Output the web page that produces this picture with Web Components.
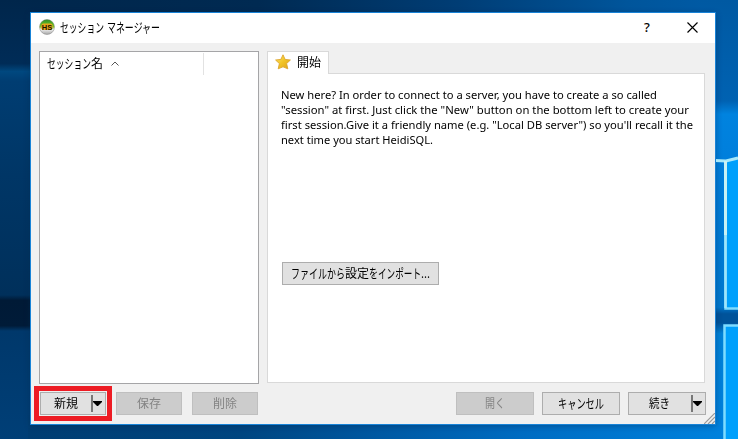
<!DOCTYPE html>
<html lang="ja">
<head>
<meta charset="utf-8">
<title>セッション マネージャー</title>
<style>
html, body { margin: 0; width: 738px; height: 439px; overflow: hidden; }
body { font: 12px/15px "Noto Sans CJK JP", "Noto Sans", sans-serif; color: #000; }
</style>
</head>
<body>
<desk-top>
  <session-dialog></session-dialog>
</desk-top>
<script>
// Text run condensed or widened to a given width.
class FitText extends HTMLElement {
  connectedCallback() {
    const root = this.attachShadow({ mode: 'open' });
    root.innerHTML = `<style>
      :host { display: inline-block; white-space: nowrap; vertical-align: top; width: ${this.getAttribute('w')}px; }
      :host([kana]) { font-size: 13px; }
      span { display: inline-block; transform-origin: 0 50%; white-space: pre; }
    </style><span><slot></slot></span>`;
    const span = root.querySelector('span');
    const w = span.getBoundingClientRect().width;
    if (w) span.style.transform = `scaleX(${this.getAttribute('w') / w})`;
  }
}

// Wallpaper with the light-window logo.
class DeskTop extends HTMLElement {
  constructor() {
    super();
    this.attachShadow({ mode: 'open' }).innerHTML = `<style>
      :host { display: grid; width: 738px; height: 439px; overflow: hidden; }
      svg, ::slotted(*) { grid-area: 1 / 1; }
      svg { display: block; }
      ::slotted(*) { margin: 12px 0 0 30px; }
    </style>
    <svg width="738" height="439" viewBox="0 0 738 439">
      <defs>
        <linearGradient id="top"><stop offset="0" stop-color="#00264b"/><stop offset=".35" stop-color="#002a52"/><stop offset=".62" stop-color="#003d75"/><stop offset=".85" stop-color="#00559b"/><stop offset="1" stop-color="#005ca8"/></linearGradient>
        <linearGradient id="left" x2="0" y2="1"><stop offset="0" stop-color="#00264b"/><stop offset=".145" stop-color="#002c57"/><stop offset=".163" stop-color="#00487f"/><stop offset=".185" stop-color="#003d72"/><stop offset=".4" stop-color="#003666"/><stop offset=".672" stop-color="#00305b"/><stop offset=".684" stop-color="#001a36"/><stop offset=".742" stop-color="#001b38"/><stop offset=".754" stop-color="#00386b"/><stop offset="1" stop-color="#003f77"/></linearGradient>
        <linearGradient id="right" x2="0" y2="1"><stop offset="0" stop-color="#0059a2"/><stop offset=".23" stop-color="#0062b2"/><stop offset=".26" stop-color="#0083df"/><stop offset=".4" stop-color="#007ddb"/><stop offset=".7" stop-color="#0078ce"/><stop offset=".715" stop-color="#00539a"/><stop offset=".735" stop-color="#00539a"/><stop offset=".76" stop-color="#0082d9"/><stop offset="1" stop-color="#0080dc"/></linearGradient>
        <linearGradient id="bottom"><stop offset="0" stop-color="#003d72"/><stop offset=".3" stop-color="#004580"/><stop offset=".5" stop-color="#0059a3"/><stop offset=".7" stop-color="#006cc2"/><stop offset="1" stop-color="#0083df"/></linearGradient>
        <filter id="soft"><feGaussianBlur stdDeviation=".7"/></filter>
        <filter id="shade" x="-10%" y="-10%" width="120%" height="120%"><feGaussianBlur stdDeviation="3"/></filter>
      </defs>
      <rect width="738" height="439" fill="url(#top)"/>
      <rect y="0" width="40" height="439" fill="url(#left)"/>
      <rect x="700" width="38" height="439" fill="url(#right)"/>
      <rect x="28" y="415" width="710" height="24" fill="url(#bottom)"/>
      <rect x="30" y="14" width="686" height="412" fill="#00264b" opacity=".4" filter="url(#shade)"/>
      <rect x="725" y="160" width="13" height="149" fill="#00a0fc"/>
      <rect x="725" y="326" width="13" height="113" fill="#00a0fc"/>
      <g filter="url(#soft)" fill="none" stroke="#7edcff">
        <path d="M715 160.500 L726 161 L738 158" stroke="#a8e8fa" stroke-width="3"/>
        <path d="M725.500 161 V308.500 H740" stroke-width="2.500"/>
        <path d="M725.500 161 V235" stroke="#c9f1f4" stroke-width="3"/>
        <path d="M725.500 235 V308" stroke="#9fe4fa" stroke-width="2.500"/>
        <path d="M724.500 445 V325.500 H740" stroke-width="2.500"/>
      </g>
    </svg><slot></slot>`;
  }
}

class PushButton extends HTMLElement {
  constructor() {
    super();
    this.attachShadow({ mode: 'open' }).innerHTML = `<style>
      :host { display: flex; box-sizing: border-box; height: 23px; border: 1px solid #adadad; background: #e1e1e1; align-items: center; justify-content: center; line-height: 17px; white-space: nowrap; }
      :host([disabled]) { background: #ccc; border-color: #bfbfbf; color: #838383; }
      .label { flex: 1; text-align: center; height: 17px; margin-top: -2px; }
      .drop { display: none; }
      :host([split]) .drop { display: block; width: 14px; height: 17px; }
      :host([split]) .label { padding-right: 1px; }
    </style><span class="label"><slot></slot></span>
    <svg class="drop" viewBox="0 0 14 17"><path d="M0 0h2v17h-2z" fill="#777"/><path d="M2 6h9v1l-4 4h-1l-4-4z"/></svg>`;
  }
}

class TitleBar extends HTMLElement {
  constructor() {
    super();
    this.attachShadow({ mode: 'open' }).innerHTML = `<style>
      :host { display: flex; height: 30px; background: #fff; align-items: center; padding-left: 8px; box-sizing: border-box; }
      .name { flex: 1; margin: -3px 0 0 5px; line-height: 17px; }
      svg { flex: none; display: block; }
      .icon { margin-top: -2px; }
      .help { font: 500 13px/18px "Noto Sans", sans-serif; width: 8px; margin: -2px 35px 0 0; }
      .close { margin: -2px 17px 0 0; }
    </style>
    <svg class="icon" width="16" height="18" viewBox="0 0 16 18">
      <defs><linearGradient id="g" x2="0" y2="1"><stop stop-color="#2f8e24"/><stop offset=".35" stop-color="#64bd27"/><stop offset=".5" stop-color="#88bf28"/><stop offset=".65" stop-color="#efefef"/><stop offset="1" stop-color="#a5a5a5"/></linearGradient></defs>
      <circle cx="8" cy="9" r="7.500" fill="url(#g)" stroke="#777" stroke-opacity=".6" stroke-width=".7"/>
      <rect x="2.500" y="5.500" width="11" height="6.500" rx="2" fill="#e9a51c"/>
      <text x="2.800" y="11.700" font-family="Liberation Sans, sans-serif" font-weight="700" font-size="7.500" textLength="10.400" lengthAdjust="spacingAndGlyphs" fill="#171500">HS</text>
    </svg>
    <span class="name"><slot></slot></span>
    <span class="help">?</span>
    <svg class="close" width="11" height="11" viewBox="0 0 11 11"><path d="M.5 .5L10.500 10.500M10.500 .5L.5 10.500" stroke="#000" stroke-width="1.150"/></svg>`;
  }
}

class SessionList extends HTMLElement {
  constructor() {
    super();
    this.attachShadow({ mode: 'open' }).innerHTML = `<style>
      :host { display: block; box-sizing: border-box; background: #fff; border: 1px solid #a5a5a7; }
      header { display: flex; box-sizing: border-box; width: 164px; height: 22px; margin-top: 1px; border-right: 1px solid #e2e2e2; padding: 1px 0 0 7px; line-height: 17px; }
      svg { margin: 7px 0 0 8px; }
    </style>
    <header><fit-text kana w="44">セッション</fit-text><fit-text w="12">名</fit-text>
    <svg width="8" height="5" viewBox="0 0 8 5"><path d="M.5 4.500L4 1L7.500 4.500" fill="none" stroke="#555"/></svg></header>`;
  }
}

class StartTab extends HTMLElement {
  constructor() {
    super();
    this.attachShadow({ mode: 'open' }).innerHTML = `<style>
      :host { display: flex; flex-direction: column; }
      .tab { position: relative; z-index: 1; display: flex; box-sizing: border-box; width: 62px; height: 23px; margin-bottom: -1px; border: 1px solid #d9d9d9; border-bottom: 0; background: #fff; padding: 2px 0 0 7px; line-height: 17px; }
      .tab fit-text { margin: -1px 0 0 6px; }
      .page { flex: 1; box-sizing: border-box; border: 1px solid #d9d9d9; background: #fff; padding: 13px 0 0 13px; }
      p { margin: 0 0 115px; display: flex; flex-direction: column; font-family: "Noto Sans", sans-serif; font-size: 11px; }
      push-button { width: 157px; margin-left: 1px; }
    </style>
    <div class="tab">
      <svg width="16" height="16" viewBox="0 0 16 16"><defs><linearGradient id="s" x2="1" y2="1"><stop stop-color="#ffe66c"/><stop offset=".5" stop-color="#f1c425"/><stop offset="1" stop-color="#dda019"/></linearGradient></defs><path d="M8 .8L10.100 5.400L15.400 6L11.600 9.600L12.800 14.800L8 12.800L3.200 14.800L4.400 9.600L.6 6L5.900 5.400Z" fill="url(#s)" stroke="#dda52b" stroke-width=".9" stroke-linejoin="round"/></svg>
      <fit-text w="24">開始</fit-text>
    </div>
    <div class="page">
      <p><fit-text w="376">New here? In order to connect to a server, you have to create a so called</fit-text>
      <fit-text w="408">"session" at first. Just click the "New" button on the bottom left to create your</fit-text>
      <fit-text w="412">first session.Give it a friendly name (e.g. "Local DB server") so you'll recall it the</fit-text>
      <fit-text w="152">next time you start HeidiSQL.</fit-text></p>
      <push-button><fit-text kana w="36">ファイル</fit-text><fit-text kana w="18">から</fit-text><fit-text w="24">設定</fit-text><fit-text kana w="9">を</fit-text><fit-text kana w="43">インポート</fit-text><fit-text w="9">...</fit-text></push-button>
    </div>`;
  }
}

class SessionDialog extends HTMLElement {
  constructor() {
    super();
    this.attachShadow({ mode: 'open' }).innerHTML = `<style>
      :host { display: flex; flex-direction: column; box-sizing: border-box; width: 686px; height: 413px; border: 1px solid #1883d7; background: #f0f0f0; }
      main { display: grid; grid-template-columns: 220px 438px; column-gap: 8px; padding: 8px 0 0 8px; height: 333px; }
      start-tab { height: 332px; }
      footer { display: flex; height: 40px; align-items: flex-start; padding-left: 3px; }
      .focus { border: 5px solid #ed1c24; padding: 1px 0; margin: 2px 4px 0 0; box-sizing: border-box; width: 78px; height: 35px; }
      .focus push-button { width: 66px; margin: 0 0 0 1px; }
      push-button { margin-top: 8px; width: 78px; margin-right: 8px; }
      .small { width: 66px; margin-right: 10px; }
      .open { margin-left: 188px; }
      .more { margin-right: 0; }
      .grip { align-self: flex-end; margin: 0 0 0 -2px; }
    </style>
    <title-bar><fit-text kana w="44">セッション</fit-text><fit-text w="3"> </fit-text><fit-text kana w="53">マネージャー</fit-text></title-bar>
    <main><session-list></session-list><start-tab></start-tab></main>
    <footer>
      <div class="focus"><push-button split><fit-text w="24">新規</fit-text></push-button></div>
      <push-button class="small" disabled><fit-text w="24">保存</fit-text></push-button>
      <push-button class="small" disabled><fit-text w="24">削除</fit-text></push-button>
      <push-button class="open" disabled><fit-text w="20">開く</fit-text></push-button>
      <push-button><fit-text kana w="46">キャンセル</fit-text></push-button>
      <push-button class="more" split><fit-text w="21">続き</fit-text></push-button>
      <svg class="grip" width="11" height="11" viewBox="0 0 11 11"><path d="M0 11L11 0M4 11L11 4M8 11L11 8" stroke="#999" stroke-width="1.200"/></svg>
    </footer>`;
  }
}

customElements.define('fit-text', FitText);
customElements.define('push-button', PushButton);
customElements.define('title-bar', TitleBar);
customElements.define('session-list', SessionList);
customElements.define('start-tab', StartTab);
customElements.define('session-dialog', SessionDialog);
customElements.define('desk-top', DeskTop);
</script>
</body>
</html>
